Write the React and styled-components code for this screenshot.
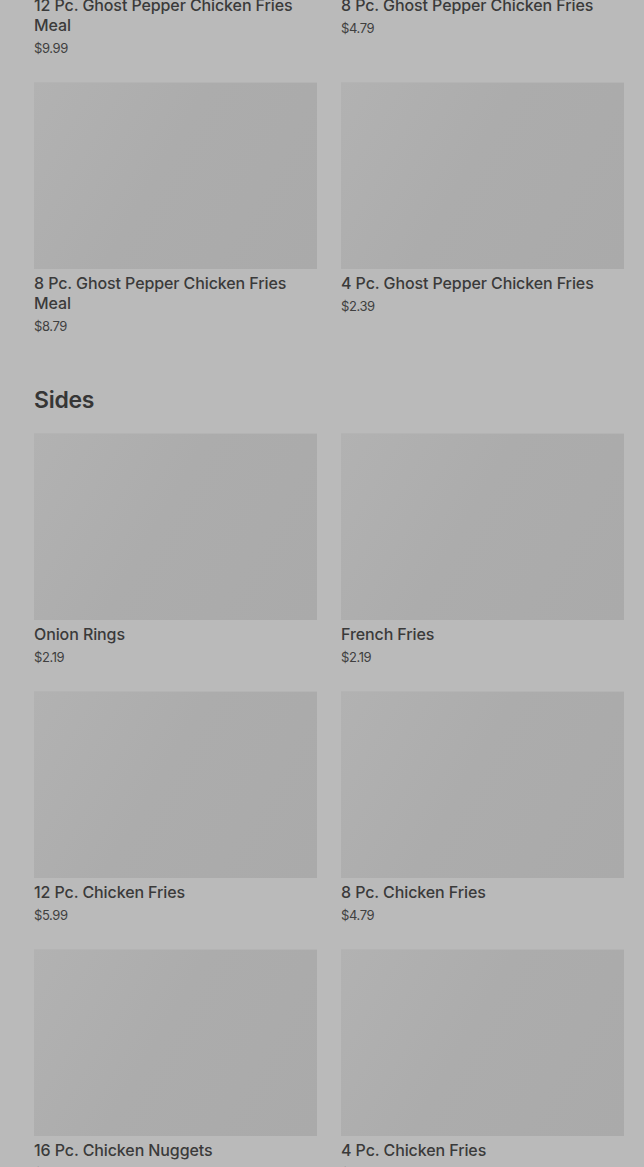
import styled, { createGlobalStyle } from "styled-components";

const GlobalStyle = createGlobalStyle`
  html, body {
    margin: 0;
    padding: 0;
    background: #bababa;
    overflow: hidden;
  }
  body {
    font-family: Inter, "Noto Sans", "Liberation Sans", sans-serif;
    color: #393939;
  }
`;

const Page = styled.div`
  margin-top: -196px;
  padding: 0 20px 0 34px;
`;

const Section = styled.section`
  & + & {
    margin-top: 49px;
  }
`;

const Heading = styled.h2`
  margin: 0 0 18px;
  padding-top: 1px;
  font-size: 23px;
  line-height: 30px;
  font-weight: 600;
  letter-spacing: -0.3px;
  color: #363636;
`;

const Grid = styled.div`
  display: grid;
  grid-template-columns: 283px 283px;
  column-gap: 24px;
  row-gap: 25px;
`;

const Card = styled.div`
  display: flex;
  flex-direction: column;
`;

const Thumb = styled.div`
  height: 187px;
  background: linear-gradient(120deg, #b2b2b2 0%, #acacac 45%, #aaaaaa 100%);
  border-top: 1px solid #b4b4b4;
  box-sizing: border-box;
`;

const Title = styled.div`
  margin-top: 4px;
  font-size: 16px;
  line-height: 20px;
  font-weight: 500;
  letter-spacing: -0.1px;
  color: #3a3a3a;
`;

const Price = styled.div`
  margin-top: 4px;
  font-size: 13px;
  line-height: 18px;
  font-weight: 400;
  letter-spacing: -0.4px;
  color: #404040;
`;

const sections = [
  {
    name: null,
    items: [
      ["12 Pc. Ghost Pepper Chicken Fries Meal", "$9.99"],
      ["8 Pc. Ghost Pepper Chicken Fries", "$4.79"],
      ["8 Pc. Ghost Pepper Chicken Fries Meal", "$8.79"],
      ["4 Pc. Ghost Pepper Chicken Fries", "$2.39"],
    ],
  },
  {
    name: "Sides",
    items: [
      ["Onion Rings", "$2.19"],
      ["French Fries", "$2.19"],
      ["12 Pc. Chicken Fries", "$5.99"],
      ["8 Pc. Chicken Fries", "$4.79"],
      ["16 Pc. Chicken Nuggets", "$4.99"],
      ["4 Pc. Chicken Fries", "$2.39"],
    ],
  },
];

function App() {
  return (
    <>
      <GlobalStyle />
      <Page>
        {sections.map((s, i) => (
          <Section key={i}>
            {s.name && <Heading>{s.name}</Heading>}
            <Grid>
              {s.items.map(([title, price]) => (
                <Card key={title}>
                  <Thumb />
                  <Title>{title}</Title>
                  <Price>{price}</Price>
                </Card>
              ))}
            </Grid>
          </Section>
        ))}
      </Page>
    </>
  );
}

export default App;
